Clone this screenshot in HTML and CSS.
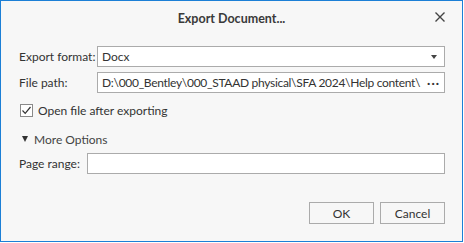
FILE: index.html
```html
<!DOCTYPE html>
<html lang="en">
<head>
  <meta charset="UTF-8" />
  <title>Export Document...</title>
  <link rel="stylesheet" href="styles.css">
</head>
<body>
  <div class="dialog">
    <div class="titlebar">
      <span class="title">Export Document...</span>
      <span class="btn-close">
        <svg width="10" height="10" viewBox="0 0 10 10"><path d="M0.5 0.5 L9.5 9.5 M9.5 0.5 L0.5 9.5" stroke="#444" stroke-width="1.4" fill="none"/></svg>
      </span>
    </div>

    <div class="content">
      <div class="form-grid">
        <label>Export format:</label>
        <div class="field combo">
          <span class="value">Docx</span>
          <span class="arrow"></span>
        </div>

        <label>File path:</label>
        <div class="field path">
          <span class="value">D:\000_Bentley\000_STAAD physical\SFA 2024\Help content\</span>
          <span class="dots">···</span>
        </div>
      </div>

      <div class="check-row">
        <span class="checkbox">
          <svg width="11" height="11" viewBox="0 0 11 11"><path d="M1.5 5.5 L4.2 8.3 L9.5 2" stroke="#333" stroke-width="1.2" fill="none"/></svg>
        </span>
        <span>Open file after exporting</span>
      </div>

      <div class="more">
        <span class="tri"></span>
        <span>More Options</span>
      </div>

      <div class="range-row">
        <label>Page range:</label>
        <div class="field"></div>
      </div>

      <div class="actions">
        <button class="btn">OK</button>
        <button class="btn">Cancel</button>
      </div>
    </div>
  </div>
</body>
</html>
```

FILE: styles.css
```css
* {
  margin: 0;
  padding: 0;
  box-sizing: border-box;
}

html, body {
  background: #ffffff;
  font-family: Lato, 'Noto Sans', sans-serif;
  font-size: 12px;
  color: #333333;
}

.dialog {
  width: 463px;
  height: 242px;
  background: #f7f7f7;
  border: 1px solid #1c7fd6;
}

.titlebar {
  height: 33px;
  display: flex;
  align-items: center;
  justify-content: center;
  position: relative;
}

.title {
  font-weight: 700;
  color: #3a3a3a;
  font-size: 12.5px;
  margin-top: 1px;
}

.btn-close {
  position: absolute;
  right: 17px;
  top: 11px;
  width: 10px;
  height: 10px;
  display: flex;
}

.content {
  padding: 12px 17px 0 17px;
}

.form-grid {
  display: grid;
  grid-template-columns: 79px 1fr;
  row-gap: 5px;
  align-items: center;
}

label {
  padding-left: 1px;
  color: #333333;
  white-space: nowrap;
}

.field {
  height: 21px;
  background: #ffffff;
  border: 1px solid #ababab;
  display: flex;
  align-items: center;
  padding: 0 4px;
  overflow: hidden;
}

.field .value {
  flex: 1;
  white-space: nowrap;
  overflow: hidden;
}

.combo .arrow {
  width: 0;
  height: 0;
  border-left: 3.5px solid transparent;
  border-right: 3.5px solid transparent;
  border-top: 4px solid #444;
  margin-right: 3px;
}

.path .value {
  letter-spacing: -0.3px;
}

.path .dots {
  font-weight: 700;
  letter-spacing: 1px;
  margin-left: 3px;
  color: #333;
}

.check-row {
  display: flex;
  align-items: center;
  gap: 5px;
  margin-top: 9px;
  padding-left: 2px;
  height: 16px;
}

.checkbox {
  width: 13px;
  height: 13px;
  border: 1px solid #8a8a8a;
  background: #ffffff;
  display: flex;
  align-items: center;
  justify-content: center;
}

.more {
  display: flex;
  align-items: center;
  gap: 6px;
  margin-top: 13px;
  padding-left: 4px;
  color: #444;
  height: 16px;
}

.tri {
  width: 0;
  height: 0;
  border-left: 3.5px solid transparent;
  border-right: 3.5px solid transparent;
  border-top: 6px solid #333;
}

.range-row {
  display: grid;
  grid-template-columns: 69px 1fr;
  align-items: center;
  margin-top: 6px;
}

.range-row label {
  overflow: hidden;
}

.actions {
  display: flex;
  justify-content: flex-end;
  gap: 6px;
  margin-top: 28px;
}

.btn {
  width: 65px;
  height: 22px;
  background: #f7f7f7;
  border: 1px solid #ababab;
  font-family: inherit;
  font-size: 12px;
  color: #333;
}
```
